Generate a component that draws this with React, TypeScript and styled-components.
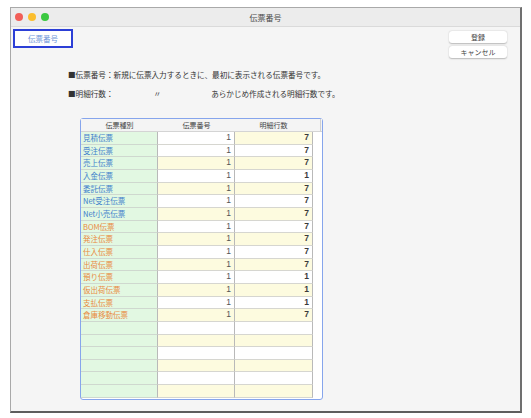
import React from "react";
import styled, { createGlobalStyle } from "styled-components";

const GlobalStyle = createGlobalStyle`
  html, body {
    margin: 0;
    padding: 0;
    background: #ffffff;
    font-family: "Noto Sans CJK JP", "Noto Sans", sans-serif;
  }
`;

type Kind = "sales" | "purchase" | "none";

interface IRow {
  name: string;
  no: string;
  lines: string;
  kind: Kind;
}

const rows: IRow[] = [
  { name: "見積伝票", no: "1", lines: "7", kind: "sales" },
  { name: "受注伝票", no: "1", lines: "7", kind: "sales" },
  { name: "売上伝票", no: "1", lines: "7", kind: "sales" },
  { name: "入金伝票", no: "1", lines: "1", kind: "sales" },
  { name: "委託伝票", no: "1", lines: "7", kind: "sales" },
  { name: "Net受注伝票", no: "1", lines: "7", kind: "sales" },
  { name: "Net小売伝票", no: "1", lines: "7", kind: "sales" },
  { name: "BOM伝票", no: "1", lines: "7", kind: "purchase" },
  { name: "発注伝票", no: "1", lines: "7", kind: "purchase" },
  { name: "仕入伝票", no: "1", lines: "7", kind: "purchase" },
  { name: "出荷伝票", no: "1", lines: "7", kind: "purchase" },
  { name: "預り伝票", no: "1", lines: "1", kind: "purchase" },
  { name: "仮出荷伝票", no: "1", lines: "1", kind: "purchase" },
  { name: "支払伝票", no: "1", lines: "1", kind: "purchase" },
  { name: "倉庫移動伝票", no: "1", lines: "7", kind: "purchase" },
  { name: "", no: "", lines: "", kind: "none" },
  { name: "", no: "", lines: "", kind: "none" },
  { name: "", no: "", lines: "", kind: "none" },
  { name: "", no: "", lines: "", kind: "none" },
  { name: "", no: "", lines: "", kind: "none" },
  { name: "", no: "", lines: "", kind: "none" },
];

const App = () => {
  return (
    <>
      <GlobalStyle />
      <Page>
        <Window>
          <TitleBar>
            <Lights>
              <Light color="#f25f58" />
              <Light color="#fbbe2e" />
              <Light color="#3bc840" />
            </Lights>
            <Title>伝票番号</Title>
          </TitleBar>
          <Body>
            <TopRow>
              <TabBox>伝票番号</TabBox>
              <ButtonStack>
                <Button>登録</Button>
                <Button>キャンセル</Button>
              </ButtonStack>
            </TopRow>
            <Notes>
              <NoteLine>■伝票番号：新規に伝票入力するときに、最初に表示される伝票番号です。</NoteLine>
              <NoteLine>
                <span>■明細行数：</span>
                <Ditto>〃</Ditto>
                <Desc>あらかじめ作成される明細行数です。</Desc>
              </NoteLine>
            </Notes>
            <TableFrame>
              <HeaderRow>
                <HeadCell>伝票種別</HeadCell>
                <HeadCell>伝票番号</HeadCell>
                <HeadCell last>明細行数</HeadCell>
              </HeaderRow>
              {rows.map((r, i) => {
                const odd = i % 2 === 0;
                return (
                  <Row key={i}>
                    <NameCell kind={r.kind}>{r.name}</NameCell>
                    <NumCell yellow={odd && i !== 0}>{r.no}</NumCell>
                    <NumCell yellow={odd} bold>{r.lines}</NumCell>
                  </Row>
                );
              })}
            </TableFrame>
          </Body>
        </Window>
      </Page>
    </>
  );
};

export default App;

const Page = styled.div`
  width: 531px;
  height: 418px;
  padding: 7px 0 0 10px;
  box-sizing: border-box;
`;

const Window = styled.div`
  width: 512px;
  height: 406px;
  box-sizing: border-box;
  background: #f5f5f5;
  border: 1px solid #a9a9a9;
  border-right: 2px solid #707070;
  border-bottom: 2px solid #5e5e5e;
  display: flex;
  flex-direction: column;
`;

const TitleBar = styled.div`
  height: 18px;
  flex-shrink: 0;
  position: relative;
  display: flex;
  align-items: center;
  justify-content: center;
  background: #ececec;
  border-bottom: 1px solid #dadada;
`;

const Lights = styled.div`
  position: absolute;
  left: 4px;
  top: 5px;
  display: flex;
  gap: 5px;
`;

const Light = styled.div<{ color: string }>`
  width: 8px;
  height: 8px;
  border-radius: 50%;
  background: ${({ color }) => color};
`;

const Title = styled.div`
  font-size: 8px;
  color: #4a4a4a;
`;

const Body = styled.div`
  flex: 1;
  padding: 2px 13px 0 2px;
  display: flex;
  flex-direction: column;
`;

const TopRow = styled.div`
  display: flex;
  justify-content: space-between;
  align-items: flex-start;
`;

const TabBox = styled.div`
  width: 60px;
  height: 19px;
  box-sizing: border-box;
  border: 2px solid #2c3fd6;
  background: #ffffff;
  color: #6d95d8;
  font-size: 7.5px;
  display: flex;
  align-items: center;
  justify-content: center;
`;

const ButtonStack = styled.div`
  margin-top: 2px;
  display: flex;
  flex-direction: column;
  gap: 3px;
`;

const Button = styled.div`
  width: 58px;
  height: 12px;
  background: #ffffff;
  border-radius: 3px;
  box-shadow: 0 0.5px 1.5px rgba(0, 0, 0, 0.25);
  font-size: 7px;
  color: #444;
  display: flex;
  align-items: center;
  justify-content: center;
`;

const Notes = styled.div`
  margin: 11px 0 0 55px;
  display: flex;
  flex-direction: column;
  gap: 8px;
`;

const NoteLine = styled.div`
  font-size: 7.6px;
  line-height: 11px;
  color: #333;
  white-space: nowrap;
  display: flex;
`;

const Ditto = styled.span`
  margin-left: 40px;
`;

const Desc = styled.span`
  margin-left: 50px;
`;

const TableFrame = styled.div`
  margin: 19px 0 0 67px;
  width: 243px;
  box-sizing: border-box;
  border: 1.5px solid #86a5ec;
  border-radius: 3px;
  background: #ffffff;
  padding: 0 9px 1px 0;
`;

const HeaderRow = styled.div`
  display: grid;
  grid-template-columns: 77px 77px 86px;
  height: 12px;
  margin-right: -9px;
  background: #f4f4f4;
  border-bottom: 1px solid #d4d4d4;
`;

const HeadCell = styled.div<{ last?: boolean }>`
  font-size: 7px;
  color: #444;
  display: flex;
  align-items: center;
  justify-content: center;
  border-right: ${({ last }) => (last ? "1px solid #d0d0d0" : "none")};
  padding-right: ${({ last }) => (last ? "8px" : "0")};
`;

const Row = styled.div`
  display: grid;
  grid-template-columns: 77px 77px 78px;
  height: 12.67px;
`;

const NameCell = styled.div<{ kind: Kind }>`
  background: #e2f8e2;
  border-right: 1px solid #b9b9b9;
  border-bottom: 1px solid #cfd8cf;
  font-size: 7.5px;
  line-height: 11.67px;
  padding-left: 2px;
  white-space: nowrap;
  color: ${({ kind }) => (kind === "sales" ? "#3f7fcb" : kind === "purchase" ? "#e98a3e" : "#333")};
`;

const NumCell = styled.div<{ yellow?: boolean; bold?: boolean }>`
  background: ${({ yellow }) => (yellow ? "#fdfbdf" : "#ffffff")};
  border-right: 1px solid #b9b9b9;
  border-bottom: 1px solid #d6d6d0;
  font-size: 8.5px;
  line-height: 11.67px;
  font-weight: ${({ bold }) => (bold ? 700 : 400)};
  color: ${({ bold }) => (bold ? "#3a3a3a" : "#555")};
  text-align: right;
  padding-right: 3px;
  font-family: "Liberation Sans", sans-serif;
`;
